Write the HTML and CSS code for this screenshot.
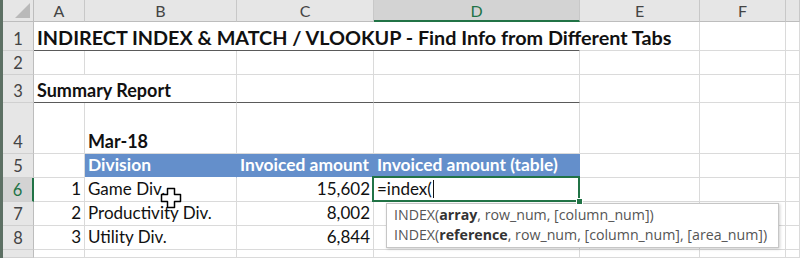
FILE: index.html
```html
<!DOCTYPE html>
<html lang="en">
<head>
    <meta charset="UTF-8">
    <title>INDIRECT INDEX &amp; MATCH</title>
    <link rel="stylesheet" href="styles.css">
</head>
<body>
    <div class="window">
        <div class="edge"></div>
        <div class="sheet">
            <!-- column headers -->
            <div class="corner"><span class="corner-tri"></span></div>
            <div class="colhead">A</div>
            <div class="colhead">B</div>
            <div class="colhead">C</div>
            <div class="colhead active">D</div>
            <div class="colhead">E</div>
            <div class="colhead">F</div>
            <div class="colhead"></div>

            <!-- row 1 -->
            <div class="rowhead">1</div>
            <div class="cell title span4 underline no-right">INDIRECT INDEX &amp; MATCH / VLOOKUP - Find Info from Different Tabs</div>
            <div class="cell"></div>
            <div class="cell"></div>
            <div class="cell"></div>

            <!-- row 2 -->
            <div class="rowhead">2</div>
            <div class="cell"></div>
            <div class="cell"></div>
            <div class="cell"></div>
            <div class="cell"></div>
            <div class="cell"></div>
            <div class="cell"></div>
            <div class="cell"></div>

            <!-- row 3 -->
            <div class="rowhead">3</div>
            <div class="cell bold span2 underline">Summary Report</div>
            <div class="cell underline"></div>
            <div class="cell underline"></div>
            <div class="cell"></div>
            <div class="cell"></div>
            <div class="cell"></div>

            <!-- row 4 -->
            <div class="rowhead">4</div>
            <div class="cell"></div>
            <div class="cell bold">Mar-18</div>
            <div class="cell"></div>
            <div class="cell"></div>
            <div class="cell"></div>
            <div class="cell"></div>
            <div class="cell"></div>

            <!-- row 5 -->
            <div class="rowhead">5</div>
            <div class="cell"></div>
            <div class="cell th">Division</div>
            <div class="cell th">Invoiced amount</div>
            <div class="cell th">Invoiced amount (table)</div>
            <div class="cell"></div>
            <div class="cell"></div>
            <div class="cell"></div>

            <!-- row 6 -->
            <div class="rowhead active">6</div>
            <div class="cell num">1</div>
            <div class="cell">Game Div.</div>
            <div class="cell num">15,602</div>
            <div class="cell editing">=index(<span class="caret"></span><span class="fill-handle"></span></div>
            <div class="cell"></div>
            <div class="cell"></div>
            <div class="cell"></div>

            <!-- row 7 -->
            <div class="rowhead">7</div>
            <div class="cell num">2</div>
            <div class="cell">Productivity Div.</div>
            <div class="cell num">8,002</div>
            <div class="cell"></div>
            <div class="cell"></div>
            <div class="cell"></div>
            <div class="cell"></div>

            <!-- row 8 -->
            <div class="rowhead">8</div>
            <div class="cell num">3</div>
            <div class="cell">Utility Div.</div>
            <div class="cell num">6,844</div>
            <div class="cell"></div>
            <div class="cell"></div>
            <div class="cell"></div>
            <div class="cell"></div>

            <!-- row 9 (cut off) -->
            <div class="rowhead"></div>
            <div class="cell"></div>
            <div class="cell"></div>
            <div class="cell"></div>
            <div class="cell"></div>
            <div class="cell"></div>
            <div class="cell"></div>
            <div class="cell"></div>

            <div class="tooltip">
                <div>INDEX(<b>array</b>, row_num, [column_num])</div>
                <div>INDEX(<b>reference</b>, row_num, [column_num], [area_num])</div>
            </div>

            <svg class="cursor" width="22" height="22" viewBox="0 0 22 22">
                <path d="M7.5 1.5h7v6h6v7h-6v6h-7v-6h-6v-7h6z" fill="#fff" stroke="#000" stroke-width="1.5" stroke-linejoin="round"/>
            </svg>
        </div>
    </div>
</body>
</html>
```

FILE: styles.css
```css
body {
    margin: 0;
    padding: 0;
    background-color: white;
    font-family: Lato, "Open Sans", sans-serif;
    overflow: hidden;
}
.window {
    display: flex;
    height: 258px;
}
.edge {
    width: 3px;
    background-color: #5d7064;
}
.sheet {
    position: relative;
    flex: 1;
    display: grid;
    grid-template-columns: 31px 51px 152px 137px 206px 120px 86px 14px;
    grid-template-rows: 22px 29px 24px 28px 51px 24px 24px 24px 24px 8px;
    color: #111;
    font-size: 17px;
}
.corner {
    position: relative;
    background-color: #e6e6e6;
    border-right: 1px solid #bdbdbd;
    border-bottom: 1px solid #bdbdbd;
}
.corner-tri {
    position: absolute;
    right: 3px;
    bottom: 3px;
    width: 0;
    height: 0;
    border-left: 15px solid transparent;
    border-bottom: 15px solid #b9b9b9;
}
.colhead {
    background-color: #e6e6e6;
    border-right: 1px solid #c8c8c8;
    border-bottom: 1px solid #bdbdbd;
    color: #444;
    font-size: 16px;
    display: flex;
    align-items: center;
    justify-content: center;
}
.colhead.active {
    background-color: #d3d3d3;
    color: #217346;
    border-bottom: 2px solid #217346;
}
.rowhead {
    background-color: #e6e6e6;
    border-right: 1px solid #bdbdbd;
    border-bottom: 1px solid #d0d0d0;
    color: #444;
    font-size: 16.5px;
    display: flex;
    align-items: flex-end;
    justify-content: center;
    padding-bottom: 1px;
}
.rowhead.active {
    background-color: #d3d3d3;
    color: #217346;
    border-right: 2px solid #217346;
}
.cell {
    border-right: 1px solid #dadada;
    border-bottom: 1px solid #dadada;
    display: flex;
    align-items: flex-end;
    padding: 0 3px 2px;
    white-space: nowrap;
    line-height: 20px;
}
.span2 {
    grid-column: span 2;
}
.span4 {
    grid-column: span 4;
}
.no-right {
    border-right-color: transparent;
}
.underline {
    border-bottom: 1px solid #5a5a5a;
}
.title {
    font-size: 19.8px;
    font-weight: bold;
    padding-bottom: 3px;
}
.bold {
    font-weight: bold;
    font-size: 18px;
}
.num {
    justify-content: flex-end;
}
.th {
    background-color: #648fcb;
    border-right-color: #648fcb;
    border-bottom-color: #ffffff;
    color: white;
    font-weight: bold;
    font-size: 17.4px;
}
.editing {
    position: relative;
}
.editing::after {
    content: "";
    position: absolute;
    left: -2px;
    top: -2px;
    right: -1px;
    bottom: -1px;
    border: 2px solid #217346;
}
.caret {
    display: inline-block;
    width: 1px;
    height: 18px;
    margin-left: 1px;
    margin-bottom: 1px;
    background-color: #111;
}
.fill-handle {
    position: absolute;
    right: -4px;
    bottom: -4px;
    width: 5px;
    height: 5px;
    background-color: #217346;
    border: 1px solid white;
    z-index: 2;
}
.tooltip {
    position: absolute;
    left: 383px;
    top: 203px;
    box-sizing: border-box;
    width: 393px;
    height: 45px;
    padding: 1px 7px;
    background-color: white;
    border: 1px solid #c6c6c6;
    box-shadow: 1px 1px 3px rgba(0, 0, 0, 0.2);
    color: #555;
    font-family: "Open Sans", sans-serif;
    font-size: 14.2px;
    line-height: 20px;
    white-space: nowrap;
}
.tooltip b {
    color: #333;
}
.cursor {
    position: absolute;
    left: 157px;
    top: 187px;
}
```
